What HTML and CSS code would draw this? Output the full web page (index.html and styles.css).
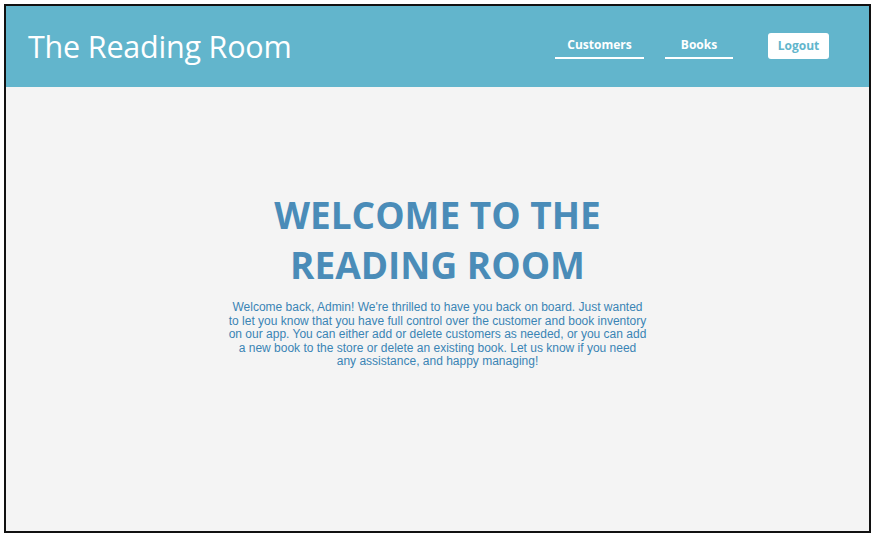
FILE: index.html
```html
<!DOCTYPE html>
<html lang="en">
<head>
<meta charset="utf-8">
<title>The Reading Room</title>
<link rel="stylesheet" href="styles.css">
</head>
<body>
<div class="frame">
  <header class="topbar">
    <h1 class="brand">The Reading Room</h1>
    <nav class="nav">
      <a class="nav-link nav-customers" href="#">Customers</a>
      <a class="nav-link nav-books" href="#">Books</a>
      <button class="logout" type="button">Logout</button>
    </nav>
  </header>
  <main class="hero">
    <h2 class="hero-title">WELCOME TO THE<br>READING ROOM</h2>
    <p class="hero-text">Welcome back, Admin! We're thrilled to have you back on board. Just wanted to let you know that you have full control over the customer and book inventory on our app. You can either add or delete customers as needed, or you can add a new book to the store or delete an existing book. Let us know if you need any assistance, and happy managing!</p>
  </main>
</div>
</body>
</html>
```
FILE: styles.css
```css
* { box-sizing: border-box; }
html, body { margin: 0; padding: 0; background: #ffffff; }
body { width: 877px; height: 535px; overflow: hidden; }

.frame {
  margin: 4px 6px 3px 4px;
  width: 867px;
  height: 529px;
  border: 2px solid #111;
  background: #f4f4f4;
  display: flex;
  flex-direction: column;
}

.topbar {
  height: 81px;
  background: #62b5cc;
  display: flex;
  align-items: center;
  justify-content: space-between;
  padding: 0 40px 0 22px;
  flex-shrink: 0;
}

.brand {
  margin: 0 0 2px 0;
  font-family: "Open Sans", "Noto Sans", sans-serif;
  font-weight: 400;
  font-size: 30.5px;
  letter-spacing: -0.2px;
  color: #ffffff;
}

.nav {
  display: flex;
  align-items: center;
  margin-top: 2px;
}

.nav-link {
  font-family: "Open Sans", "Noto Sans", sans-serif;
  font-weight: 700;
  font-size: 12px;
  color: #ffffff;
  text-decoration: none;
  text-align: center;
  padding: 0 0 4px 0;
  border-bottom: 2px solid #ffffff;
}
.nav-customers { width: 89px; }
.nav-books { width: 68px; margin-left: 21px; }

.logout {
  margin-left: 35px;
  margin-bottom: 3px;
  width: 61px;
  height: 26px;
  border: none;
  border-radius: 3px;
  background: #ffffff;
  color: #62b5cc;
  font-family: "Open Sans", "Noto Sans", sans-serif;
  font-weight: 700;
  font-size: 12px;
  padding: 0 0 1px 0;
}

.hero {
  display: flex;
  flex-direction: column;
  align-items: center;
  padding-top: 103px;
}

.hero-title {
  margin: 0;
  font-family: "Open Sans", "Noto Sans", sans-serif;
  font-weight: 700;
  font-size: 37px;
  line-height: 50px;
  letter-spacing: 0;
  color: #4a8cb8;
  text-align: center;
}

.hero-text {
  margin: 11px 0 0 0;
  width: 420px;
  font-family: "Liberation Sans", Arial, sans-serif;
  font-size: 12px;
  line-height: 13.6px;
  color: #3a84b4;
  text-align: center;
}
```
